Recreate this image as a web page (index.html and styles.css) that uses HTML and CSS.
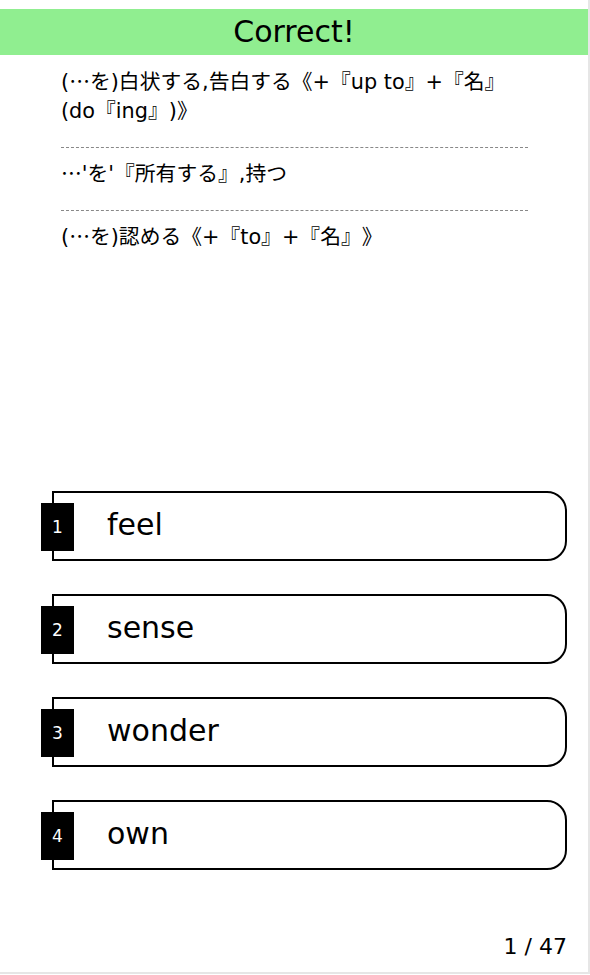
FILE: index.html
```html
<!DOCTYPE html>
<html lang="ja">
<head>
<meta charset="utf-8">
<title>Quiz</title>
<link rel="stylesheet" href="styles.css">
</head>
<body>
<div class="page">
  <div class="banner">Correct!</div>
  <div class="defs">
    <div class="def">(<span class="cjk">…</span>を)白状する,告白する《+『up to』+『名』<span class="nowrap">(do『ing』)》</span></div>
    <div class="def"><span class="cjk">…</span>'を'『所有する』,持つ</div>
    <div class="def last">(<span class="cjk">…</span>を)認める《+『to』+『名』》</div>
  </div>
  <div class="choices">
    <div class="choice"><span class="num">1</span><span class="word">feel</span></div>
    <div class="choice"><span class="num">2</span><span class="word">sense</span></div>
    <div class="choice"><span class="num">3</span><span class="word">wonder</span></div>
    <div class="choice"><span class="num">4</span><span class="word">own</span></div>
  </div>
  <div class="footer">1 / 47</div>
</div>
</body>
</html>
```

FILE: styles.css
```css
html, body {
  margin: 0;
  padding: 0;
  background: #fff;
}
body {
  font-family: "DejaVu Sans", "Noto Sans CJK JP", sans-serif;
  color: #000;
}
.page {
  width: 590px;
  height: 974px;
  box-sizing: border-box;
  border-right: 2px solid #e6e6e6;
  border-bottom: 2px solid #e6e6e6;
  display: flex;
  flex-direction: column;
}
.banner {
  margin-top: 9px;
  height: 46px;
  line-height: 46px;
  background: #90ee90;
  text-align: center;
  font-size: 30px;
}
.defs {
  padding: 1px 60px 0 61px;
}
.def {
  font-size: 20.8px;
  line-height: 29px;
  padding: 10px 0 21px;
  border-bottom: 1px dashed #888;
  text-spacing-trim: space-all;
}
.def.last {
  border-bottom: none;
}
.cjk {
  font-family: "Noto Sans CJK JP", sans-serif;
}
.nowrap {
  white-space: nowrap;
}
.choices {
  margin-top: auto;
  display: flex;
  flex-direction: column;
  gap: 33px;
  padding-left: 52px;
}
.choice {
  position: relative;
  width: 515px;
  height: 70px;
  box-sizing: border-box;
  border: 2px solid #000;
  border-radius: 0 20px 20px 0;
  display: flex;
  align-items: center;
  padding-left: 53px;
  padding-bottom: 4px;
}
.num {
  position: absolute;
  left: -13px;
  top: 10px;
  width: 33px;
  height: 48px;
  background: #000;
  color: #fff;
  font-size: 17px;
  display: flex;
  align-items: center;
  justify-content: center;
}
.word {
  font-size: 30px;
}
.footer {
  padding: 62px 21px 10px 0;
  line-height: 30px;
  font-size: 22px;
  text-align: right;
}
```
